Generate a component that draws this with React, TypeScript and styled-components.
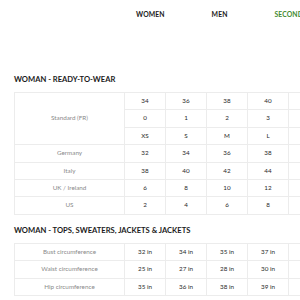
import styled, { createGlobalStyle } from "styled-components";

const GlobalStyle = createGlobalStyle`
  html, body {
    margin: 0;
    padding: 0;
    background: #ffffff;
    overflow: hidden;
    font-family: "Lato", "Liberation Sans", sans-serif;
  }
`;

const readyToWear = [
  { label: "Standard (FR)", rows: [["34", "36", "38", "40", ""], ["0", "1", "2", "3", ""], ["XS", "S", "M", "L", ""]] },
  { label: "Germany", rows: [["32", "34", "36", "38", ""]] },
  { label: "Italy", rows: [["38", "40", "42", "44", ""]] },
  { label: "UK / Ireland", rows: [["6", "8", "10", "12", ""]] },
  { label: "US", rows: [["2", "4", "6", "8", ""]] },
];

const tops = [
  { label: "Bust circumference", rows: [["32 in", "34 in", "35 in", "37 in", ""]] },
  { label: "Waist circumference", rows: [["25 in", "27 in", "28 in", "30 in", ""]] },
  { label: "Hip circumference", rows: [["35 in", "36 in", "38 in", "39 in", ""]] },
];

type Group = { label: string; rows: string[][] };

const SizeTable = ({ groups }: { groups: Group[] }) => (
  <Table>
    <colgroup>
      <col style={{ width: 110 }} />
      <col style={{ width: 41 }} />
      <col style={{ width: 41 }} />
      <col style={{ width: 41 }} />
      <col style={{ width: 41 }} />
      <col style={{ width: 41 }} />
    </colgroup>
    <tbody>
      {groups.map((g) =>
        g.rows.map((r, i) => (
          <tr key={g.label + i}>
            {i === 0 && <LabelCell rowSpan={g.rows.length}>{g.label}</LabelCell>}
            {r.map((v, j) => (
              <ValueCell key={j}>{v}</ValueCell>
            ))}
          </tr>
        ))
      )}
    </tbody>
  </Table>
);

const App = () => {
  return (
    <>
      <GlobalStyle />
      <Page>
        <Nav>
          <NavItem>WOMEN</NavItem>
          <NavItem>MEN</NavItem>
          <NavItem $active>SECOND HAND</NavItem>
        </Nav>
        <Section>
          <Heading>WOMAN - READY-TO-WEAR</Heading>
          <SizeTable groups={readyToWear} />
        </Section>
        <Section $tight>
          <Heading>WOMAN - TOPS, SWEATERS, JACKETS &amp; JACKETS</Heading>
          <SizeTable groups={tops} />
        </Section>
      </Page>
    </>
  );
};

const Page = styled.div`
  width: 300px;
  height: 300px;
  overflow: hidden;
`;

const Nav = styled.div`
  display: flex;
  align-items: center;
  height: 28px;
  padding-left: 136px;
  gap: 47px;
  white-space: nowrap;
  overflow: hidden;
`;

const NavItem = styled.div<{ $active?: boolean }>`
  font-size: 6.8px;
  font-weight: 700;
  letter-spacing: 0.1px;
  color: ${(p) => (p.$active ? "#3f8a2f" : "#1a1a1a")};
`;

const Section = styled.div<{ $tight?: boolean }>`
  padding: ${(p) => (p.$tight ? "8px" : "44px")} 0 0 14px;
`;

const Heading = styled.div`
  font-size: 7.6px;
  font-weight: 700;
  color: #1b1b1b;
  height: 14px;
  line-height: 14px;
  margin-bottom: 6px;
  white-space: nowrap;
`;

const Table = styled.table`
  border-collapse: collapse;
  table-layout: fixed;
  width: 315px;
`;

const LabelCell = styled.td`
  border: 1px solid #ececec;
  height: 16.4px;
  line-height: 1;
  padding: 0;
  text-align: center;
  font-size: 6.3px;
  color: #8a8a8a;
`;

const ValueCell = styled.td`
  border: 1px solid #ececec;
  height: 16.4px;
  line-height: 1;
  padding: 0;
  text-align: center;
  font-size: 6.3px;
  color: #2a2a2a;
`;

export default App;
